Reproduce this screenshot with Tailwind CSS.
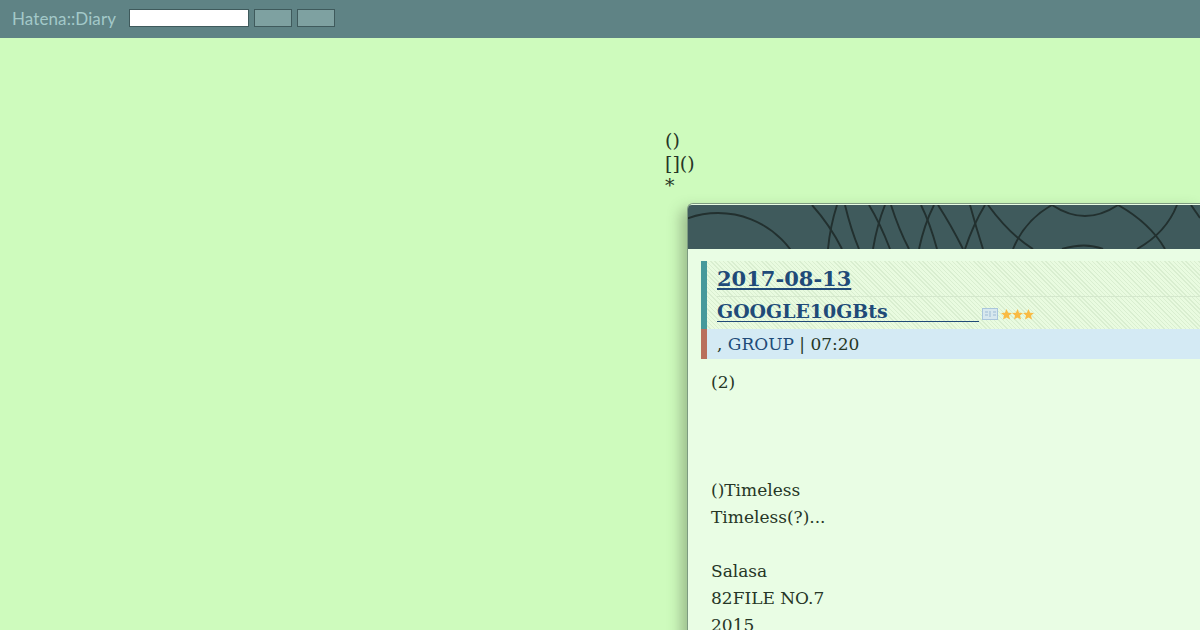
<!DOCTYPE html>
<html lang="en">
<head>
    <meta charset="UTF-8">
    <title>Hatena::Diary</title>
    <script src="https://cdn.jsdelivr.net/npm/@tailwindcss/browser@4"></script>
</head>
<body class="h-[630px] w-[1200px] overflow-hidden bg-[#cefbbd] font-['DejaVu_Serif',serif] text-[#263626]">
    <!-- top bar -->
    <div class="flex h-[38px] items-center bg-[#5f8385] pb-0.5 pl-3">
        <span class="mt-[2px] w-[117px] font-['Lato',sans-serif] text-[17px] tracking-[0.1px] text-[#a3c9c9]">Hatena::Diary</span>
        <input type="text" class="h-[18px] w-[120px] border border-[#3f5a5c] bg-white">
        <button class="ml-[5px] h-[18px] w-[38px] border border-[#3f5a5c] bg-[#7ea1a1]"></button>
        <button class="ml-[5px] h-[18px] w-[38px] border border-[#3f5a5c] bg-[#7ea1a1]"></button>
    </div>

    <div class="ml-[665px] pt-[91px]">
        <div class="text-[19px] leading-[22.5px]">
            <div>()</div>
            <div>[]()</div>
            <div>*</div>
        </div>

        <!-- diary window -->
        <div class="ml-[22px] mt-[6.5px] h-[500px] rounded-tl-[6px] border-l border-t border-[#7d9a80] bg-[#e9fde4] pt-[1px] shadow-[-6px_6px_14px_rgba(60,70,50,0.35)]">
            <svg class="block h-[44px] w-[512px] rounded-tl-[4px] bg-[#3f5a5c]" viewBox="0 0 512 44" fill="none" stroke="#22302f" stroke-width="1.9">
                <circle cx="30" cy="98" r="90"/>
                <path d="M124 0 Q142 20 154 44"/>
                <path d="M149 0 Q142 22 140 44"/>
                <path d="M157 0 Q163 25 171 44"/>
                <path d="M181 0 Q192 18 202 44"/>
                <path d="M197 0 Q189 20 185 44"/>
                <path d="M203 0 Q211 25 221 44"/>
                <path d="M233 0 Q242 18 249 44"/>
                <path d="M246 0 Q236 20 231 44"/>
                <path d="M250 0 Q263 20 275 44"/>
                <path d="M282 0 Q288 22 295 44"/>
                <path d="M297 0 Q285 20 277 44"/>
                <path d="M300 0 Q322 30 345 44"/>
                <path d="M364 0 Q337 15 325 44"/>
                <path d="M364 0 Q397 22 430 0"/>
                <path d="M430 0 Q462 18 477 44"/>
                <path d="M489 0 Q478 28 449 44"/>
                <path d="M503 0 L512 13"/>
                <path d="M374 44 Q397 37 415 44"/>
            </svg>

            <div class="ml-[13px] mt-3">
                <h1 class="border-l-[6px] border-[#46999b] bg-[repeating-linear-gradient(45deg,#e9fbe0_0,#e9fbe0_2px,#d9eed0_2px,#d9eed0_3px)] pl-2.5 font-bold text-[#204a78]">
                    <div class="flex h-[36px] items-center border-b border-[#d5e8cd] pt-[1px] text-[21px]"><span class="underline">2017-08-13</span></div>
                    <div class="flex h-[32px] items-center text-[18.9px]">
                        <span class="mb-[3px] w-[262px] border-b border-[#204a78] leading-[19px]">GOOGLE10GBts</span>
                        <svg class="ml-[3px] mt-[2px]" width="16" height="12" viewBox="0 0 16 12"><rect x="0.5" y="0.5" width="15" height="11" fill="#d7e8ee" stroke="#a9c6dc"/><path d="M3 4h3M3 7h3M8 3v6M11 4h3M11 7h3" stroke="#9dbbd4"/></svg>
                        <svg class="ml-[3px] mt-[2px]" width="33" height="11" viewBox="0 0 33 11" fill="#f9bb45">
                            <path d="M5.5 0 L7.1 3.7 L11 4 L8 6.5 L9 10.6 L5.5 8.4 L2 10.6 L3 6.5 L0 4 L3.9 3.7 Z"/>
                            <path transform="translate(11 0)" d="M5.5 0 L7.1 3.7 L11 4 L8 6.5 L9 10.6 L5.5 8.4 L2 10.6 L3 6.5 L0 4 L3.9 3.7 Z"/>
                            <path transform="translate(22 0)" d="M5.5 0 L7.1 3.7 L11 4 L8 6.5 L9 10.6 L5.5 8.4 L2 10.6 L3 6.5 L0 4 L3.9 3.7 Z"/>
                        </svg>
                    </div>
                </h1>
                <div class="flex h-[30px] items-center border-l-[6px] border-[#b96f5c] bg-[#d4eaf4] pl-2.5 pt-[2px] text-[17px]">
                    <span>,&nbsp;</span><span class="text-[#204a78]">GROUP</span><span>&nbsp;|&nbsp;07:20</span>
                </div>
            </div>

            <div class="ml-[23px] mt-[9.5px] text-[17px] leading-[27px]">
                <div>(2)</div>
                <div class="h-[27px]"></div>
                <div class="h-[27px]"></div>
                <div class="h-[27px]"></div>
                <div>()Timeless</div>
                <div>Timeless(?)...</div>
                <div class="h-[27px]"></div>
                <div>Salasa</div>
                <div>82FILE NO.7</div>
                <div>2015</div>
            </div>
        </div>
    </div>
</body>
</html>
